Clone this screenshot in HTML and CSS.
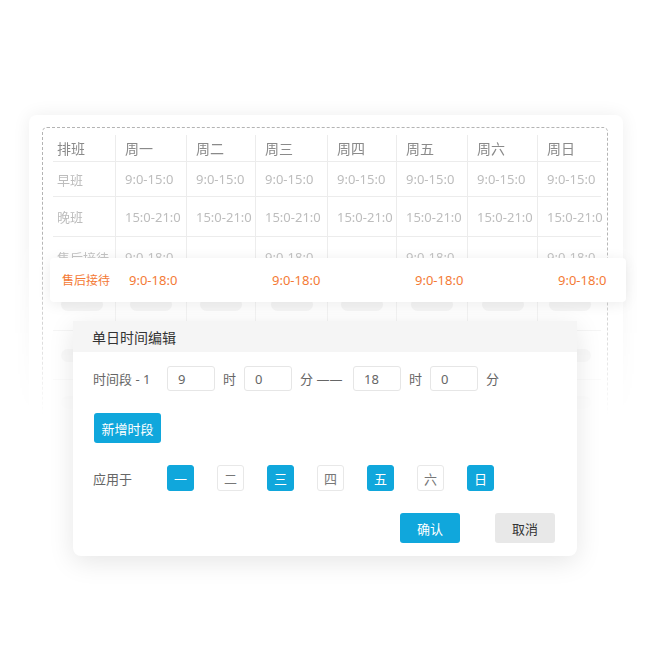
FILE: index.html
```html
<!DOCTYPE html>
<html lang="zh-CN">
<head>
<meta charset="utf-8">
<title>排班</title>
<link rel="stylesheet" href="styles.css">
</head>
<body>
<div class="stage">
  <div class="bg-wrap">
    <div class="card">
      <div class="dash">
        <div class="table">
          <div class="row head">
            <div class="cell first">排班</div>
            <div class="cell">周一</div>
            <div class="cell">周二</div>
            <div class="cell">周三</div>
            <div class="cell">周四</div>
            <div class="cell">周五</div>
            <div class="cell">周六</div>
            <div class="cell">周日</div>
          </div>
          <div class="row r1">
            <div class="cell first">早班</div>
            <div class="cell">9:0-15:0</div>
            <div class="cell">9:0-15:0</div>
            <div class="cell">9:0-15:0</div>
            <div class="cell">9:0-15:0</div>
            <div class="cell">9:0-15:0</div>
            <div class="cell">9:0-15:0</div>
            <div class="cell">9:0-15:0</div>
          </div>
          <div class="row r2">
            <div class="cell first">晚班</div>
            <div class="cell">15:0-21:0</div>
            <div class="cell">15:0-21:0</div>
            <div class="cell">15:0-21:0</div>
            <div class="cell">15:0-21:0</div>
            <div class="cell">15:0-21:0</div>
            <div class="cell">15:0-21:0</div>
            <div class="cell">15:0-21:0</div>
          </div>
          <div class="row r3">
            <div class="cell first">售后接待</div>
            <div class="cell">9:0-18:0</div>
            <div class="cell"></div>
            <div class="cell">9:0-18:0</div>
            <div class="cell"></div>
            <div class="cell">9:0-18:0</div>
            <div class="cell"></div>
            <div class="cell">9:0-18:0</div>
          </div>
          <div class="row r4 pills">
            <div class="cell first"><span class="pill"></span></div>
            <div class="cell"><span class="pill"></span></div>
            <div class="cell"><span class="pill"></span></div>
            <div class="cell"><span class="pill"></span></div>
            <div class="cell"><span class="pill"></span></div>
            <div class="cell"><span class="pill"></span></div>
            <div class="cell"><span class="pill"></span></div>
            <div class="cell"><span class="pill"></span></div>
          </div>
          <div class="row r5 pills">
            <div class="cell first"><span class="pill"></span></div>
            <div class="cell"><span class="pill"></span></div>
            <div class="cell"><span class="pill"></span></div>
            <div class="cell"><span class="pill"></span></div>
            <div class="cell"><span class="pill"></span></div>
            <div class="cell"><span class="pill"></span></div>
            <div class="cell"><span class="pill"></span></div>
            <div class="cell"><span class="pill"></span></div>
          </div>
          <div class="row r6 pills">
            <div class="cell first"><span class="pill"></span></div>
            <div class="cell"><span class="pill"></span></div>
            <div class="cell"><span class="pill"></span></div>
            <div class="cell"><span class="pill"></span></div>
            <div class="cell"><span class="pill"></span></div>
            <div class="cell"><span class="pill"></span></div>
            <div class="cell"><span class="pill"></span></div>
            <div class="cell"><span class="pill"></span></div>
          </div>
        </div>
      </div>
    </div>
  </div>

  <div class="bar">
    <span class="bar-label">售后接待</span>
    <span>9:0-18:0</span>
    <span>9:0-18:0</span>
    <span>9:0-18:0</span>
    <span>9:0-18:0</span>
  </div>

  <div class="modal">
    <div class="modal-head">单日时间编辑</div>
    <div class="modal-body">
      <div class="time-row">
        <span class="label">时间段 - 1</span>
        <span class="input">9</span>
        <span class="unit">时</span>
        <span class="input">0</span>
        <span class="unit unit-dash">分 ——</span>
        <span class="input">18</span>
        <span class="unit">时</span>
        <span class="input">0</span>
        <span class="unit">分</span>
      </div>
      <div class="add-row">
        <span class="btn btn-blue btn-add">新增时段</span>
      </div>
      <div class="apply-row">
        <span class="label">应用于</span>
        <div class="days">
          <span class="day on">一</span>
          <span class="day">二</span>
          <span class="day on">三</span>
          <span class="day">四</span>
          <span class="day on">五</span>
          <span class="day">六</span>
          <span class="day on">日</span>
        </div>
      </div>
      <div class="foot">
        <span class="btn btn-blue btn-foot">确认</span>
        <span class="btn btn-grey btn-foot">取消</span>
      </div>
    </div>
  </div>
</div>
</body>
</html>
```

FILE: styles.css
```css
* { box-sizing: border-box; }

html, body {
  margin: 0;
  padding: 0;
  background: #ffffff;
}

body {
  font-family: "Noto Sans", "Noto Sans CJK SC", sans-serif;
  color: #333;
}

.stage {
  position: relative;
  width: 650px;
  height: 650px;
  overflow: hidden;
  background: #fff;
}

/* background schedule card (faded) */
.bg-wrap {
  margin: 95px 0 0 9px;
  padding: 20px;
  width: 634px;
  -webkit-mask-image: linear-gradient(to bottom, #000 0px, #000 140px, rgba(0,0,0,0.55) 230px, transparent 320px);
  mask-image: linear-gradient(to bottom, #000 0px, #000 140px, rgba(0,0,0,0.55) 230px, transparent 320px);
}

.card {
  width: 594px;
  background: #fff;
  border-radius: 8px;
  box-shadow: 0 0 18px rgba(0, 0, 0, 0.07);
  padding: 12px 15px 40px 13px;
}

.dash {
  border: 1px dashed #b4b4b4;
  border-radius: 5px;
  padding: 7px 6px 20px 10px;
}

.table {
  width: 548px;
}

.row {
  display: grid;
  grid-template-columns: 62px 71px 69px 72px 69px 71px 70px 64px;
  border-bottom: 1px solid #ececec;
}

.cell {
  display: flex;
  align-items: center;
  border-left: 1px solid #ececec;
  padding-left: 9px;
  font-size: 13px;
  color: #bdbdbd;
  white-space: nowrap;
  overflow: visible;
}

.cell.first {
  border-left: none;
  padding-left: 4px;
  font-size: 13px;
}

.head .cell {
  font-size: 14px;
  color: #8a8a8a;
}

.head { height: 27px; }
.r1 { height: 35px; }
.r2 { height: 40px; }
.r3 { height: 41px; }
.r4 { height: 53px; }
.r5 { height: 49px; }
.r6 { height: 44px; border-bottom: none; }

.pills .cell {
  justify-content: center;
  padding-left: 0;
}

.pills .cell.first {
  justify-content: flex-start;
  padding-left: 8px;
}

.pill {
  display: block;
  width: 42px;
  height: 13px;
  border-radius: 7px;
  background: #f0f0f0;
}

/* highlighted row */
.bar {
  position: absolute;
  left: 50px;
  top: 258px;
  width: 576px;
  height: 44px;
  background: #fff;
  border-radius: 4px;
  box-shadow: 0 2px 14px rgba(0, 0, 0, 0.08);
  display: grid;
  grid-template-columns: 67px 143px 143px 143px 1fr;
  align-items: center;
  padding-left: 12px;
  font-size: 13px;
  color: #f47a35;
}

.bar-label {
  font-size: 12px;
}

/* modal */
.modal {
  position: absolute;
  left: 73px;
  top: 321px;
  width: 504px;
  height: 235px;
  background: #fff;
  border-radius: 0 0 8px 8px;
  box-shadow: 0 6px 26px rgba(0, 0, 0, 0.10);
}

.modal-head {
  height: 31px;
  background: #f5f5f5;
  padding-left: 19px;
  display: flex;
  align-items: center;
  font-size: 14px;
  color: #333;
}

.modal-body {
  padding: 14px 22px 13px 20px;
}

.label {
  width: 74px;
  flex: none;
  font-size: 13px;
  color: #666;
}

.time-row {
  display: flex;
  align-items: center;
  height: 25px;
}

.input {
  width: 48px;
  height: 25px;
  border: 1px solid #e6e6e6;
  border-radius: 3px;
  padding-left: 10px;
  display: flex;
  align-items: center;
  font-size: 13px;
  color: #666;
  flex: none;
}

.unit {
  margin: 0 8px;
  font-size: 13px;
  color: #666;
  flex: none;
}

.unit-dash {
  width: 44px;
  margin: 0 9px 0 8px;
  white-space: nowrap;
}

.add-row {
  margin-top: 22px;
  height: 30px;
  display: flex;
}

.btn {
  display: flex;
  align-items: center;
  justify-content: center;
  height: 30px;
  border-radius: 3px;
  font-size: 13px;
}

.btn-blue {
  background: #10a7dc;
  color: #fff;
}

.btn-grey {
  background: #e8e8e8;
  color: #333;
}

.btn-add {
  width: 67px;
  margin-left: 1px;
}

.apply-row {
  margin-top: 22px;
  display: flex;
  align-items: center;
  height: 26px;
}

.days {
  display: flex;
  gap: 23px;
}

.day {
  width: 27px;
  height: 26px;
  border: 1px solid #e8e8e8;
  border-radius: 3px;
  display: flex;
  align-items: center;
  justify-content: center;
  font-size: 13px;
  color: #777;
  background: #fff;
}

.day.on {
  background: #10a7dc;
  border-color: #10a7dc;
  color: #fff;
}

.foot {
  margin-top: 22px;
  display: flex;
  justify-content: flex-end;
  gap: 35px;
}

.btn-foot {
  width: 60px;
}
```
